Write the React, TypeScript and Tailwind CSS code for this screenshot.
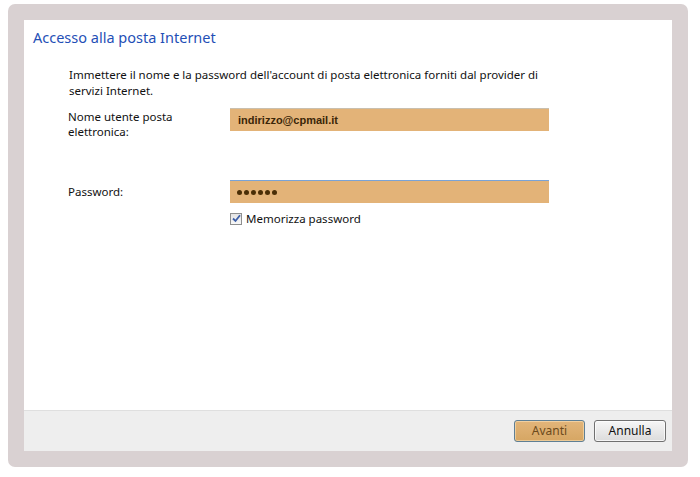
import React from "react";

const uiFont = { fontFamily: '"Noto Sans", "Open Sans", sans-serif' };

const App = () => {
  return (
    <div className="w-[700px] h-[477px] bg-white pt-[4px] pl-[8px]" style={uiFont}>
      {/* frame */}
      <div className="w-[680px] h-[463px] bg-[#d9d1d2] rounded-[7px] p-[16px]">
        <div className="w-[648px] h-[431px] bg-white flex flex-col">
          <div className="flex-1 flex flex-col">
            <h1 className="mt-[7px] ml-[9px] text-[14.5px] leading-[20px] text-[#1f4fb6]">
              Accesso alla posta Internet
            </h1>
            <p className="mt-[20px] ml-[45px] w-[475px] text-[11.5px] leading-[16px] text-[#111]">
              Immettere il nome e la password dell'account di posta elettronica forniti dal provider di servizi Internet.
            </p>

            <div className="mt-[9px] ml-[44px] flex">
              <div className="w-[162px] text-[11.5px] leading-[15px] text-[#111] pt-[1px]">
                <div>Nome utente posta</div>
                <div>elettronica:</div>
              </div>
              <div
                className="w-[319px] h-[23px] bg-[#e3b378] border-t border-[#c9bfae] flex items-center pl-[8px] text-[11px] font-bold text-[#3b2608]"
                style={{ fontFamily: '"Liberation Sans", Arial, sans-serif' }}
              >
                indirizzo@cpmail.it
              </div>
            </div>

            <div className="mt-[41px] ml-[44px] flex">
              <div className="w-[162px] text-[11.5px] leading-[15px] text-[#111] pt-[4px]">Password:</div>
              <div className="flex flex-col">
                <div className="w-[319px] h-[23px] bg-[#e3b378] border-t border-[#7aa3d6] flex items-center pl-[7px] gap-[2px]">
                  {[0, 1, 2, 3, 4, 5].map((i) => (
                    <span key={i} className="w-[5px] h-[5px] rounded-full bg-[#4a2e06]" />
                  ))}
                </div>
                <label className="mt-[8px] flex items-center gap-[4px] text-[11.5px] leading-[15px] text-[#111]">
                  <span className="w-[12px] h-[12px] border border-[#8e8f8f] bg-gradient-to-b from-[#e4e4e4] to-[#f8f8f8] flex items-center justify-center">
                    <svg width="9" height="9" viewBox="0 0 9 9">
                      <path d="M1 4.5 L3.5 7 L8 1.2" fill="none" stroke="#3d5fa8" strokeWidth="1.8" />
                    </svg>
                  </span>
                  Memorizza password
                </label>
              </div>
            </div>
          </div>

          {/* footer */}
          <div className="h-[41px] bg-[#eeeeee] border-t border-[#dfdfdf] flex items-center justify-end pr-[6px] gap-[9px]">
            <button className="w-[71px] h-[22px] bg-gradient-to-b from-[#e2b57a] to-[#d6a663] border border-[#5f7f94] rounded-[3px] text-[12px] text-[#6b4a1c] shadow-[inset_0_0_0_1px_rgba(255,235,200,0.5)]">
              Avanti
            </button>
            <button className="w-[72px] h-[22px] bg-gradient-to-b from-[#f6f6f6] to-[#dcdcdc] border border-[#707070] rounded-[3px] text-[12px] text-[#111] shadow-[inset_0_0_0_1px_rgba(255,255,255,0.7)]">
              Annulla
            </button>
          </div>
        </div>
      </div>
    </div>
  );
};

export default App;
